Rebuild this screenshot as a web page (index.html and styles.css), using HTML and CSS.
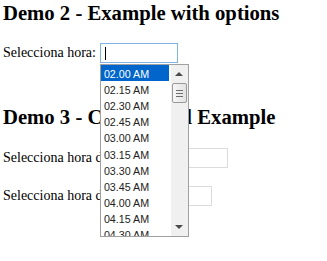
FILE: index.html
```html
<!DOCTYPE html>
<html>
<head>
<meta charset="utf-8">
<link rel="stylesheet" href="styles.css">
</head>
<body>
<h2 class="title">Demo 2 - Example with options</h2>
<div class="row row-1">
  <label class="label">Selecciona hora:</label>
  <span class="field-wrap">
    <input class="field field-focus" type="text">
    <span class="caret"></span>
    <div class="dropdown">
      <ul class="list">
        <li class="item item-selected">02.00 AM</li>
        <li class="item">02.15 AM</li>
        <li class="item">02.30 AM</li>
        <li class="item">02.45 AM</li>
        <li class="item">03.00 AM</li>
        <li class="item">03.15 AM</li>
        <li class="item">03.30 AM</li>
        <li class="item">03.45 AM</li>
        <li class="item">04.00 AM</li>
        <li class="item">04.15 AM</li>
        <li class="item">04.30 AM</li>
        <li class="item">04.45 AM</li>
      </ul>
      <div class="scrollbar">
        <span class="arrow arrow-up"></span>
        <span class="thumb"><span class="grip"></span><span class="grip"></span><span class="grip"></span></span>
        <span class="track-fill"></span>
        <span class="arrow arrow-down"></span>
      </div>
    </div>
  </span>
</div>
<h2 class="title title-2">Demo 3 - Conditional Example</h2>
<div class="row row-2">
  <label class="label">Selecciona hora de inicio:</label>
  <input class="field field-small" type="text">
</div>
<div class="row row-3">
  <label class="label">Selecciona hora de fin:</label>
  <input class="field field-small" type="text">
</div>
</body>
</html>
```
FILE: styles.css
```css
html {
  margin: 0;
  padding: 0;
  background: #fff;
}
body {
  margin: 0;
  padding: 0 0 0 3px;
  min-height: 261px;
  font-family: "Liberation Serif", "Times New Roman", serif;
  color: #000;
  background: #fff;
}
.title {
  font-size: 20.7px;
  font-weight: bold;
  line-height: 23px;
  margin: 2px 0 0 0;
  white-space: nowrap;
}
.title-2 {
  margin-top: 43px;
}
.row {
  display: flex;
  align-items: center;
  gap: 4px;
  font-size: 14px;
  height: 20px;
}
.row-1 {
  margin-top: 18px;
}
.row-2 {
  margin-top: 19px;
}
.row-3 {
  margin-top: 18px;
}
.label {
  white-space: nowrap;
}
.field-wrap {
  position: relative;
  display: block;
  width: 78px;
  height: 20px;
}
.field {
  box-sizing: border-box;
  width: 78px;
  height: 20px;
  margin: 0;
  padding: 0 4px;
  border: 1px solid #dcdcdc;
  background: #fff;
  outline: none;
  font-size: 13px;
}
.field-small {
  width: 76px;
}
.field-focus {
  border-color: #7eb4ea;
}
.caret {
  position: absolute;
  left: 5px;
  top: 4px;
  width: 1px;
  height: 13px;
  background: #000;
}
.dropdown {
  position: absolute;
  left: 0;
  top: 21px;
  z-index: 10;
  box-sizing: border-box;
  width: 89px;
  height: 173px;
  border: 1px solid #a0a0a0;
  background: #fff;
  display: flex;
  overflow: hidden;
}
.list {
  list-style: none;
  margin: 0;
  padding: 0;
  width: 68px;
  flex: none;
  overflow: hidden;
  font-family: "Liberation Sans", Arial, sans-serif;
  font-size: 10.7px;
  color: #222;
}
.item {
  box-sizing: border-box;
  height: 16.2px;
  line-height: 14.6px;
  padding: 1.6px 0 0 3px;
  white-space: nowrap;
}
.item-selected {
  background: #0066cc;
  color: #fff;
}
.scrollbar {
  margin-left: 2px;
  width: 17px;
  flex: none;
  background: #f0f0f0;
  display: flex;
  flex-direction: column;
  align-items: center;
}
.arrow {
  width: 0;
  height: 0;
  border-left: 4px solid transparent;
  border-right: 4px solid transparent;
  flex: none;
}
.arrow-up {
  margin-top: 7px;
  border-bottom: 4px solid #4a4a4a;
}
.arrow-down {
  margin-bottom: 7px;
  border-top: 4px solid #4a4a4a;
}
.thumb {
  box-sizing: border-box;
  margin-top: 7px;
  width: 15px;
  height: 20px;
  border: 1px solid #9a9a9a;
  border-radius: 2px;
  background: linear-gradient(to right, #f7f7f7, #e2e2e2);
  display: flex;
  flex-direction: column;
  align-items: center;
  justify-content: center;
  gap: 2px;
  flex: none;
}
.grip {
  width: 7px;
  height: 1px;
  background: #6e6e6e;
}
.track-fill {
  flex: 1;
}
```
